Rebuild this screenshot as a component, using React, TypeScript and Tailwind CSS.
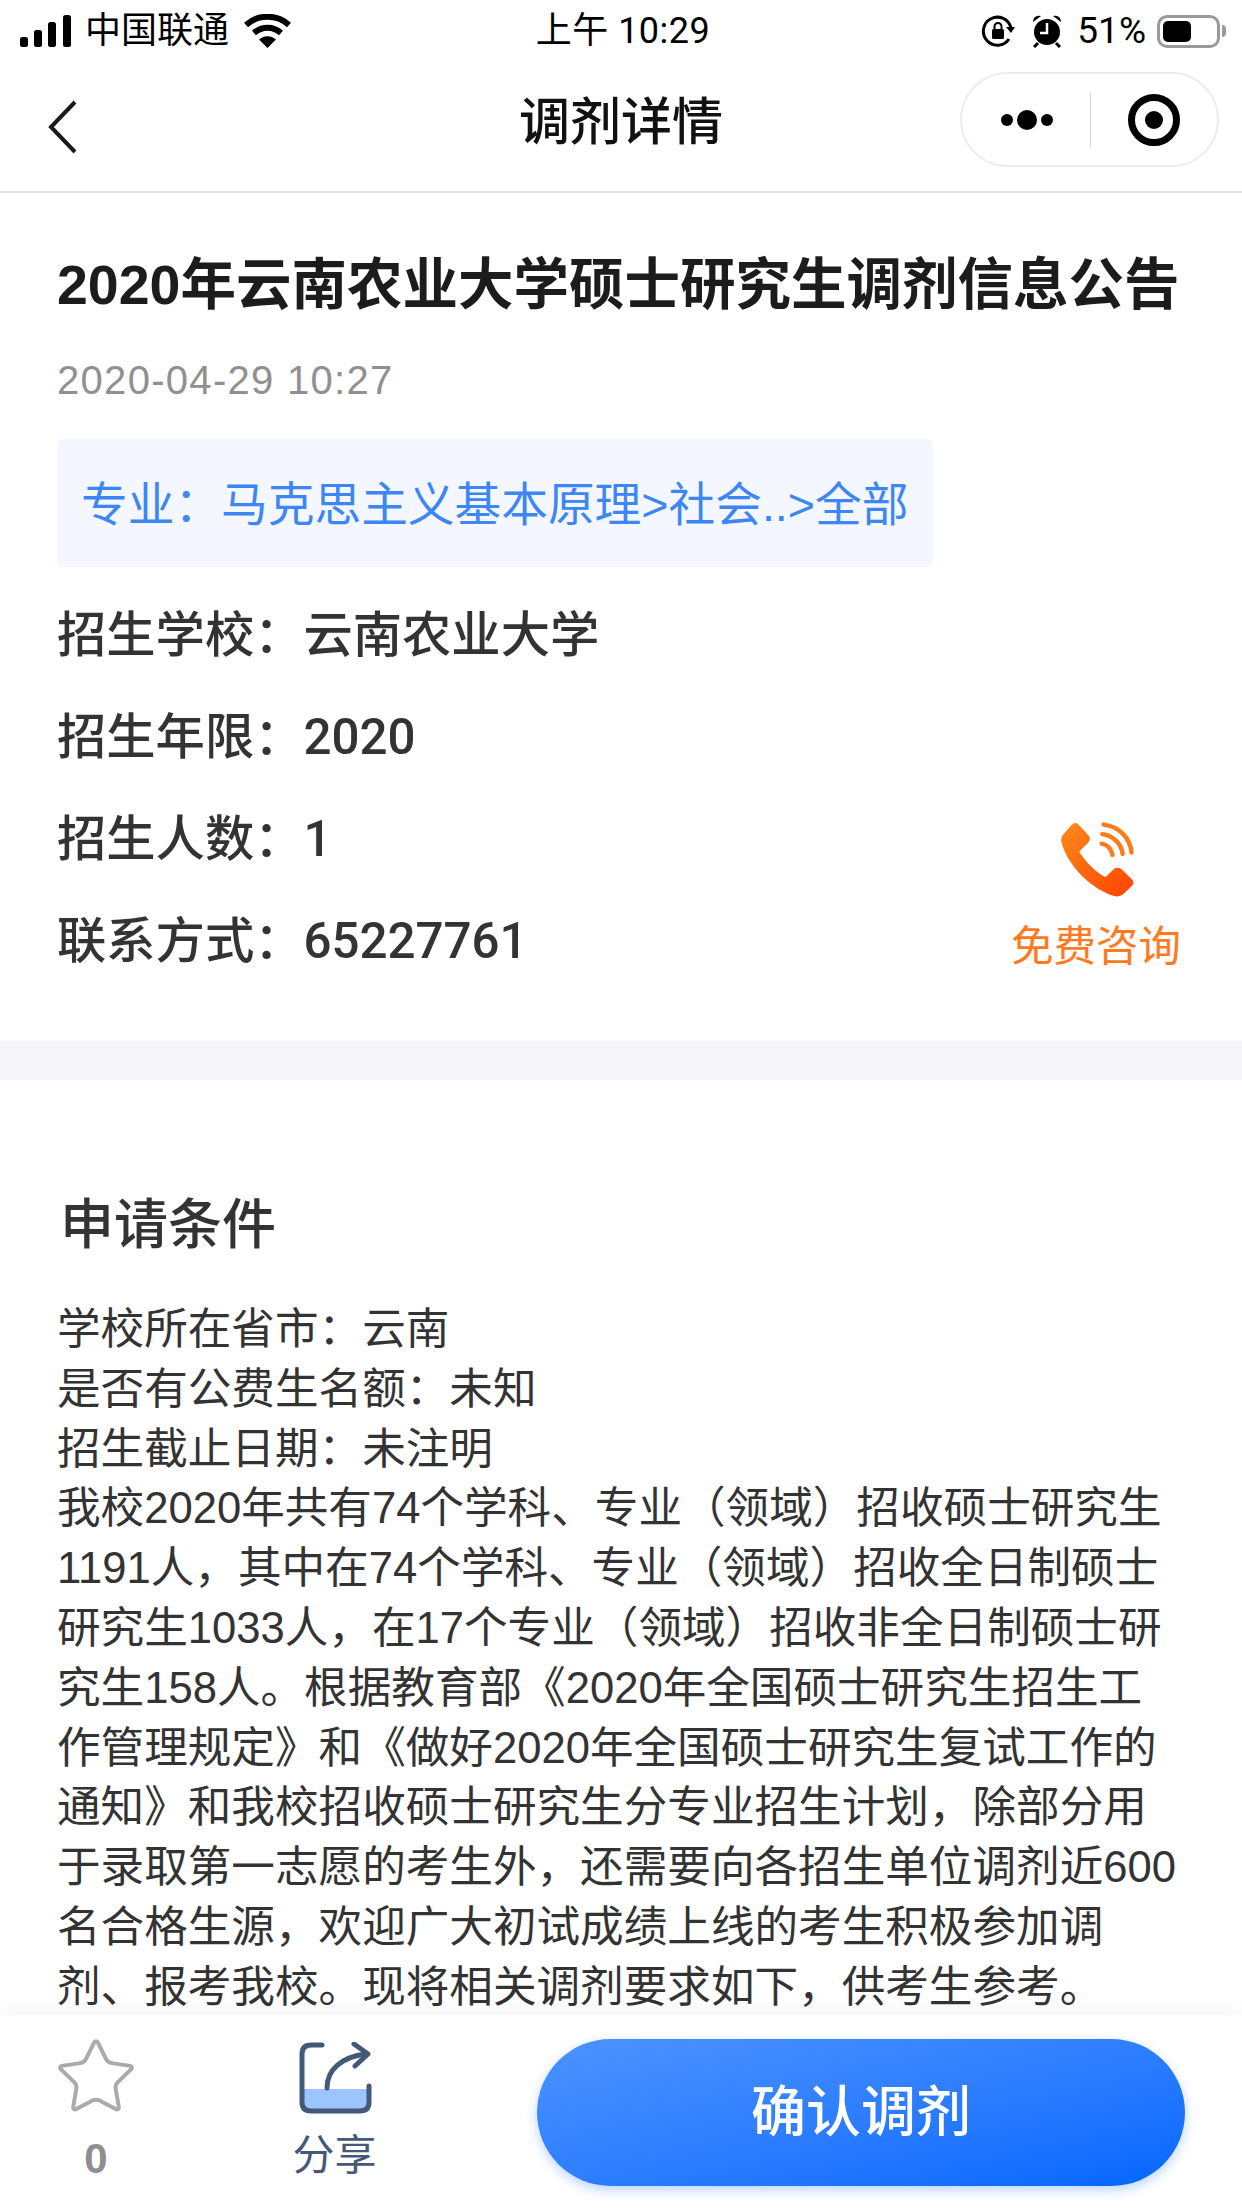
import { Star } from "lucide-react";

const conditionLines = [
  "学校所在省市：云南",
  "是否有公费生名额：未知",
  "招生截止日期：未注明",
  "我校2020年共有74个学科、专业（领域）招收硕士研究生",
  "1191人，其中在74个学科、专业（领域）招收全日制硕士",
  "研究生1033人，在17个专业（领域）招收非全日制硕士研",
  "究生158人。根据教育部《2020年全国硕士研究生招生工",
  "作管理规定》和《做好2020年全国硕士研究生复试工作的",
  "通知》和我校招收硕士研究生分专业招生计划，除部分用",
  "于录取第一志愿的考生外，还需要向各招生单位调剂近600",
  "名合格生源，欢迎广大初试成绩上线的考生积极参加调",
  "剂、报考我校。现将相关调剂要求如下，供考生参考。",
];

const infoRows = [
  ["招生学校：", "云南农业大学"],
  ["招生年限：", "2020"],
  ["招生人数：", "1"],
  ["联系方式：", "65227761"],
];

function StatusBar() {
  return (
    <div className="h-[62px] shrink-0 flex items-center justify-between pl-[20px] pr-[16px] text-black font-[Roboto,'Noto_Sans_CJK_SC',sans-serif]">
      <div className="flex items-center w-[400px]">
        <svg width="51" height="32" viewBox="0 0 51 32" fill="black">
          <rect x="0" y="22" width="8" height="10" rx="2.5" />
          <rect x="14" y="15" width="8" height="17" rx="2.5" />
          <rect x="28" y="7" width="8" height="25" rx="2.5" />
          <rect x="43" y="0" width="8" height="32" rx="2.5" />
        </svg>
        <span className="ml-[14px] text-[36px] leading-[40px]">中国联通</span>
        <svg className="ml-[15px]" width="47" height="34" viewBox="0 0 47 34" fill="none" stroke="black">
          <path d="M2 11C14 0 33 0 45 11" strokeWidth="6" />
          <path d="M10 19C18 12 29 12 37 19" strokeWidth="6" />
          <path d="M23.5 34L15 25.5C20 21 27 21 32 25.5Z" fill="black" stroke="none" />
        </svg>
      </div>
      <div className="text-[36px] leading-[40px] tracking-[0.5px]">上午 10:29</div>
      <div className="flex items-center justify-end w-[400px]">
        <svg width="34" height="34" viewBox="0 0 34 34" fill="none" stroke="black" strokeWidth="3">
          <path d="M28 25A14 14 0 1 1 30 14" />
          <path d="M25 13L30 19L34 13Z" fill="black" stroke="none" />
          <rect x="11" y="15" width="12" height="10" rx="1.5" fill="black" stroke="none" />
          <path d="M13.5 15V12.5a3.5 3.5 0 0 1 7 0V15" strokeWidth="2" />
        </svg>
        <svg className="ml-[16px]" width="32" height="34" viewBox="0 0 32 34" fill="black">
          <circle cx="16" cy="18" r="13" />
          <path d="M2 8A6 6 0 0 1 10 2ZM30 8A6 6 0 0 0 22 2Z" />
          <path d="M7 29L3 33M25 29L29 33" stroke="black" strokeWidth="3" />
          <path d="M16 9V19H9" stroke="white" strokeWidth="2.5" fill="none" />
        </svg>
        <span className="ml-[14px] text-[37px] leading-[40px]">51%</span>
        <div className="ml-[11px] w-[63px] h-[33px] rounded-[10px] border-[3px] border-[#9a9a9a] p-[3px]">
          <div className="w-[28px] h-full rounded-[5px] bg-black" />
        </div>
        <div className="ml-[2px] w-[4px] h-[12px] rounded-r-full bg-[#9a9a9a]" />
      </div>
    </div>
  );
}

function NavBar() {
  return (
    <div className="h-[131px] shrink-0 flex items-center relative border-b-2 border-[#e2e2e2]">
      <svg className="absolute left-[45px] top-[36px]" width="34" height="56" viewBox="0 0 34 56" fill="none" stroke="#1a1a1a" strokeWidth="4">
        <path d="M30 4L6 29L30 54" />
      </svg>
      <div className="w-full text-center text-[51px] leading-[60px] font-medium text-[#111] -mt-[8px]">调剂详情</div>
      <div className="absolute left-[960px] top-[10px] w-[259px] h-[95px] rounded-full border-2 border-[#ececec] flex items-center">
        <div className="w-[128px] flex items-center justify-center gap-[4px] pl-[2px]">
          <div className="w-[12px] h-[12px] rounded-full bg-black" />
          <div className="w-[20px] h-[20px] rounded-full bg-black" />
          <div className="w-[12px] h-[12px] rounded-full bg-black" />
        </div>
        <div className="w-[1px] h-[55px] bg-[#d8d8d8]" />
        <div className="flex-1 flex items-center justify-center">
          <div className="w-[52px] h-[52px] rounded-full border-[7px] border-black flex items-center justify-center">
            <div className="w-[18px] h-[18px] rounded-full bg-black" />
          </div>
        </div>
      </div>
    </div>
  );
}

function PhoneIcon() {
  return (
    <svg className="ml-[5px]" width="80" height="82" viewBox="300 90 235 240">
      <defs>
        <linearGradient id="phoneGrad" x1="0" y1="0" x2="1" y2="1">
          <stop offset="0" stopColor="#ff8a1c" />
          <stop offset="1" stopColor="#ff4300" />
        </linearGradient>
      </defs>
      <path
        d="M350 102Q345 100 335 112L315 135Q305 148 312 165C335 235 400 295 465 316Q480 320 492 310L518 285Q526 275 516 266L490 240Q478 228 465 236L440 260C415 250 380 215 362 185L388 160Q398 148 390 138L362 108Q355 100 350 102Z"
        fill="url(#phoneGrad)"
      />
      <g fill="none" stroke="#ff7a1a" strokeWidth="13" strokeLinecap="round">
        <path d="M434 106C480 112 512 145 516 188" />
        <path d="M430 134C462 138 486 162 490 192" />
        <path d="M428 162C445 165 456 178 460 195" />
      </g>
    </svg>
  );
}

function ShareIcon() {
  return (
    <svg width="74" height="72" viewBox="0 0 74 72" fill="none">
      <path d="M3 47H70V60Q70 70 60 70H13Q3 70 3 60Z" fill="#9cc5ff" />
      <g stroke="#44597a" strokeWidth="5" strokeLinecap="round" strokeLinejoin="round">
        <path d="M23 3H12Q3 3 3 12V60Q3 69 12 69H61Q70 69 70 60V44" />
        <path d="M28 46C28 28 42 15 67 12" />
        <path d="M55 2L69 12L56 24" />
      </g>
    </svg>
  );
}

function BottomBar() {
  return (
    <div className="relative h-[193px] shrink-0 bg-white shadow-[0_-8px_14px_rgba(0,0,0,0.035)] flex items-start">
      <div className="ml-[54px] w-[84px] flex flex-col items-center pt-[21px]">
        <Star size={86} strokeWidth={1.1} className="text-[#aaaaaa] -m-[2px]" />
        <div className="mt-[18px] text-[42px] leading-[46px] font-bold text-[#8e8e8e]">0</div>
      </div>
      <div className="ml-[153px] w-[90px] flex flex-col items-center pt-[27px]">
        <ShareIcon />
        <div className="mt-[19px] -ml-[3px] text-[42px] leading-[46px] text-[#44597a]">分享</div>
      </div>
      <div className="ml-[156px] mt-[24px] w-[648px] h-[147px] rounded-full bg-gradient-to-br from-[#4c93ff] to-[#0066ff] shadow-[0_4px_12px_rgba(30,110,255,0.3)] flex items-center justify-center text-white text-[55px] font-medium">
        确认调剂
      </div>
    </div>
  );
}

export default function App() {
  return (
    <div lang="zh-CN" className="w-[1242px] h-[2208px] overflow-hidden flex flex-col bg-white font-['Liberation_Sans','Noto_Sans_CJK_SC',sans-serif]">
      <StatusBar />
      <NavBar />
      <div className="flex-1 min-h-0 overflow-hidden">
        <div className="px-[57px] pt-[62px] pb-[49px]">
          <h1 className="text-[55.5px] leading-[60px] font-bold text-[#1c1c1c] whitespace-nowrap">2020年云南农业大学硕士研究生调剂信息公告</h1>
          <div className="mt-[45px] text-[40px] leading-[40px] text-[#909090] tracking-[1.3px]">2020-04-29 10:27</div>
          <div className="mt-[39px] w-[876px] h-[128px] px-[24px] pt-[4px] flex items-center rounded-[6px] bg-[#f4f7ff] text-[#3d86f5] text-[46.7px] whitespace-nowrap">
            专业：马克思主义基本原理&gt;社会..&gt;全部
          </div>
          <div className="mt-[17px] flex justify-between">
            <div>
              {infoRows.map(([label, value]) => (
                <div key={label} className="h-[102px] pt-[2px] flex items-center text-[49.3px] text-[#333] font-medium font-[Roboto,'Noto_Sans_CJK_SC',sans-serif]">
                  <span>{label}</span>
                  <span>{value}</span>
                </div>
              ))}
            </div>
            <div className="self-end mb-[20px] mr-[4px] flex flex-col items-center">
              <PhoneIcon />
              <div className="mt-[21px] text-[42.5px] leading-[50px] text-[#ff7a1f]">免费咨询</div>
            </div>
          </div>
        </div>
        <div className="h-[39px] bg-[#f6f6fa]" />
        <div className="px-[57px] pt-[110px]">
          <h2 className="text-[54px] leading-[70px] font-medium text-[#333] px-[3px]">申请条件</h2>
          <div className="mt-[40px] text-[43.6px] leading-[59.8px] text-[#333] whitespace-nowrap">
            {conditionLines.map((line) => (
              <div key={line}>{line}</div>
            ))}
          </div>
        </div>
      </div>
      <BottomBar />
    </div>
  );
}
